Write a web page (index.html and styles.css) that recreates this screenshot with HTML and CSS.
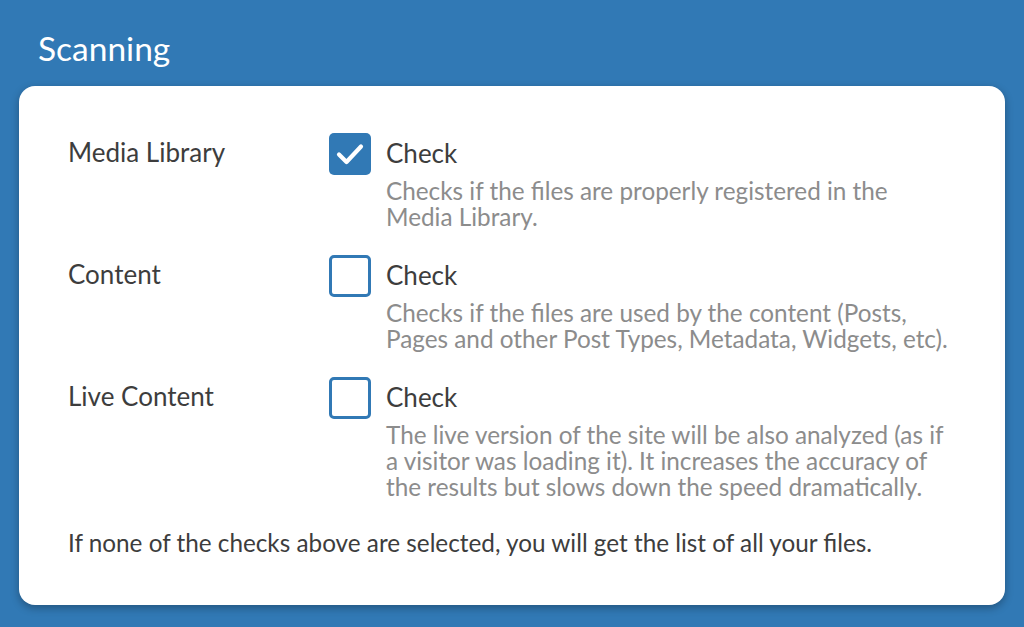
FILE: index.html
```html
<!DOCTYPE html>
<html>
<head>
<meta charset="utf-8">
<link rel="stylesheet" href="styles.css">
</head>
<body>
<div class="page">
  <h1 class="title">Scanning</h1>
  <div class="card">
    <div class="row">
      <div class="label">Media Library</div>
      <div class="field">
        <div class="check-line">
          <span class="box checked">
            <svg viewBox="0 0 42 42" width="42" height="42"><path d="M10 21.5 L17.5 29 L32 13.5" fill="none" stroke="#fff" stroke-width="4.2" stroke-linecap="round" stroke-linejoin="round"/></svg>
          </span>
          <span class="check-text">Check</span>
        </div>
        <div class="desc">Checks if the files are properly registered in the<br>Media Library.</div>
      </div>
    </div>
    <div class="row">
      <div class="label">Content</div>
      <div class="field">
        <div class="check-line">
          <span class="box"></span>
          <span class="check-text">Check</span>
        </div>
        <div class="desc">Checks if the files are used by the content (Posts,<br>Pages and other Post Types, Metadata, Widgets, etc).</div>
      </div>
    </div>
    <div class="row">
      <div class="label">Live Content</div>
      <div class="field">
        <div class="check-line">
          <span class="box"></span>
          <span class="check-text">Check</span>
        </div>
        <div class="desc">The live version of the site will be also analyzed (as if<br>a visitor was loading it). It increases the accuracy of<br>the results but slows down the speed dramatically.</div>
      </div>
    </div>
    <p class="note">If none of the checks above are selected, you will get the list of all your files.</p>
  </div>
</div>
</body>
</html>
```
FILE: styles.css
```css
html, body {
  margin: 0;
  padding: 0;
  background: #3179b5;
}
body {
  font-family: Lato, "Open Sans", sans-serif;
  width: 1024px;
  height: 627px;
  overflow: hidden;
}
.page {
  padding: 27px 19px 0 19px;
}
.title {
  margin: 0 0 0 19px;
  font-size: 33.5px;
  font-weight: 400;
  color: #fff;
  line-height: 42px;
  height: 59px;
}
.card {
  background: #fff;
  border-radius: 16px;
  box-shadow: 0 3px 8px rgba(0, 0, 0, 0.3);
  padding: 47px 49px 0 49px;
  height: 472px;
}
.row {
  display: flex;
  margin-bottom: 25px;
}
.label {
  width: 261px;
  flex: none;
  font-size: 26px;
  color: #3d3d3d;
  line-height: 38px;
}
.field {
  display: flex;
  flex-direction: column;
}
.check-line {
  display: flex;
  align-items: center;
  gap: 15px;
  height: 42px;
}
.box {
  width: 42px;
  height: 42px;
  box-sizing: border-box;
  border: 3px solid #3179b5;
  border-radius: 5px;
  flex: none;
  display: block;
}
.box.checked {
  background: #3179b5;
  border: none;
}
.box svg {
  display: block;
}
.check-text {
  font-size: 26px;
  line-height: 30px;
  margin-top: -2px;
  color: #3d3d3d;
}
.desc {
  margin-left: 57px;
  margin-top: 3px;
  font-size: 24.3px;
  line-height: 26px;
  color: #8c8c8c;
}
.note {
  margin: 30px 0 0 0;
  font-size: 24.3px;
  line-height: 26px;
  color: #3d3d3d;
}
```
